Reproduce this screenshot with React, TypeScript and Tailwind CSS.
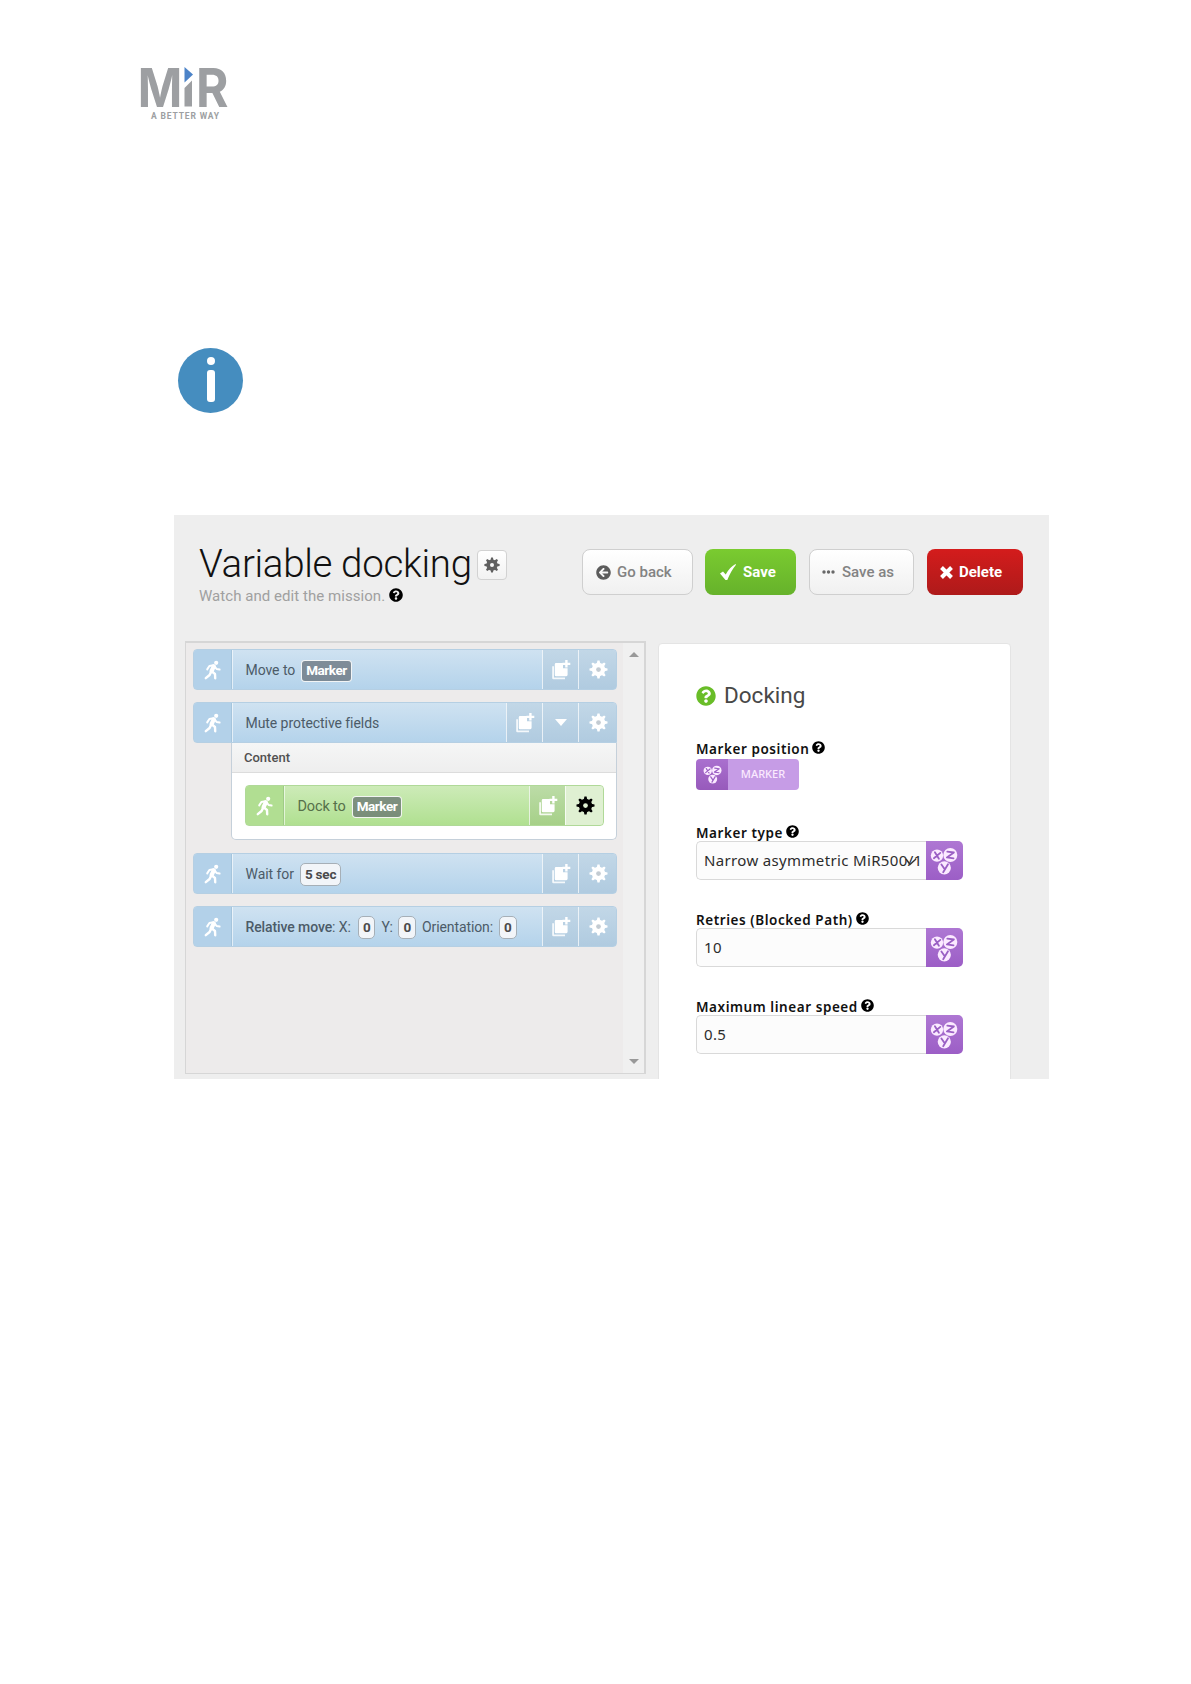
import React from "react";
import { FaQuestionCircle, FaArrowCircleLeft } from "react-icons/fa";

const Gear = ({ className = "", hole = "#dfe3e8" }: { className?: string; hole?: string }) => (
  <svg viewBox="0 0 20 20" className={className} fill="currentColor">
    {[0, 45, 90, 135].map((a) => (
      <path key={a} d="M8.1 4 8.9 .5h2.2L11.9 4v12l-.8 3.5H8.9L8.1 16z" transform={`rotate(${a} 10 10)`} />
    ))}
    <circle cx="10" cy="10" r="7" />
    <circle cx="10" cy="10" r="2.5" fill={hole} />
  </svg>
);

const Runner = () => (
  <svg viewBox="0 0 18 20" className="h-5 w-[18px]" fill="none" stroke="#fff" strokeLinecap="round" strokeLinejoin="round">
    <circle cx="12.2" cy="2.8" r="2.1" fill="#fff" stroke="none" />
    <path d="M9.8 6.4 7.6 11.200" strokeWidth="4.200" />
    <path d="M9.5 5.2 5.4 6 3.200 9.400M10.600 6.300l2 2.700 3 .5" strokeWidth="2" />
    <path d="M7.800 11.400 11 14l.2 4.300M7 12 5.600 15l-3.800 3.200" strokeWidth="2.400" />
  </svg>
);

const AddCopy = () => (
  <svg viewBox="0 0 20 20" className="h-5 w-5" fill="#fff">
    <path d="M1.2 6.2h1.8v11.4h11v1.6H2.4q-1.2 0-1.2-1.2z" opacity=".85" />
    <path d="M5 3h7v5.200h4.600v6.600q0 1.400-1.400 1.400H5q-1.200 0-1.200-1.200V4.200Q3.800 3 5 3z" />
    <path d="M14.200 0h2.400v2.700h2.700v2.200h-2.700v2.700h-2.400V4.900h-2.700V2.700h2.700z" />
  </svg>
);

const Trio = ({ className = "" }: { className?: string }) => (
  <svg viewBox="0 0 28 28" className={className}>
    <g fill="#fbeaff">
      <circle cx="7" cy="8.600" r="6.200" />
      <circle cx="20.300" cy="8" r="7" />
      <circle cx="14.300" cy="20.800" r="6.600" />
    </g>
    <g fill="none" stroke="#9a5fc4" strokeWidth="1.800" strokeLinecap="round" strokeLinejoin="round">
      <path d="M4.900 5.300 8.900 11.800M10.300 5.900 3.900 11.200" />
      <path d="M17.300 4.600l6.600 .9-7 4.900 6.600 1" />
      <path d="m11.400 17.400 2.800 4.200M18 17.200l-4.800 8" />
    </g>
  </svg>
);

const Tag = ({ children }: { children: React.ReactNode }) => (
  <span className="ml-[6px] flex h-[22px] items-center rounded-[4px] border border-white/90 bg-[#596169]/65 px-[4px] text-[13.500px] font-bold tracking-[-0.45px] text-white">
    {children}
  </span>
);

const Value = ({ children }: { children: React.ReactNode }) => (
  <span className="flex h-[23px] items-center rounded-[5px] border border-[#a6afb7] bg-[#f2f5f9] px-[4px] text-[13.500px] font-bold tracking-[-0.2px] text-[#4a4a4c]">
    {children}
  </span>
);

type RowProps = { children: React.ReactNode; expandable?: boolean; green?: boolean; flat?: boolean };

const Row = ({ children, expandable, green, flat }: RowProps) => (
  <div
    className={`flex overflow-hidden border text-[14px] tracking-[-0.06px] ${flat ? "rounded-t-[4px] rounded-bl-[4px]" : "rounded-[4px]"} ${
      green
        ? "h-[41px] border-[#b0d998] bg-linear-to-b from-[#cdebb8] to-[#b0e090] text-[#56704a]"
        : "h-full border-[#b5cfe3] bg-linear-to-b from-[#cfe2f1] to-[#b4d3eb] text-[#4c5b68]"
    }`}
  >
    <div
      className={`flex w-[38px] items-center justify-center border-r ${
        green ? "border-[#9fcc86] bg-[#b1de92]" : "border-[#a5c5dd] bg-[#b3d1e9]"
      }`}
    >
      <Runner />
    </div>
    <div className="flex flex-1 items-center border-l border-white/60 pt-[2px] pl-[12.500px] whitespace-nowrap">{children}</div>
    <div
      className={`flex w-[36px] items-center justify-center border-l border-white/70 ${
        green ? "bg-linear-to-b from-[#bcdca7] to-[#a6d088]" : "bg-linear-to-b from-[#c2d7e7] to-[#b0cbe0]"
      }`}
    >
      <AddCopy />
    </div>
    {expandable && (
      <div className="flex w-[36px] items-center justify-center border-l border-white/70 bg-linear-to-b from-[#c2d7e7] to-[#b0cbe0]">
        <span className="ml-px border-x-[6px] border-t-[7px] border-x-transparent border-t-white" />
      </div>
    )}
    <div
      className={`flex w-[38px] items-center justify-center border-l border-white/70 pl-px ${
        green ? "bg-[#dff0d2] text-black" : "bg-linear-to-b from-[#c2d7e7] to-[#b0cbe0] text-white"
      }`}
    >
      <Gear className="size-[19px]" hole={green ? "#dff0d2" : "#c3cbd2"} />
    </div>
  </div>
);

const Label = ({ children }: { children: React.ReactNode }) => (
  <div className="flex h-[21px] items-center pt-[2px] font-['Noto_Sans'] text-[13.500px] font-semibold tracking-[0.560px] text-[#111]">
    {children}
    <FaQuestionCircle className="mb-[5px] ml-[3px] size-[13px] text-black" />
  </div>
);

const Field = ({ children, select }: { children: React.ReactNode; select?: boolean }) => (
  <div className="flex h-[39px] w-[267px] font-['Noto_Sans'] text-[15px] tracking-[0.350px] text-[#2c2c2c]">
    <div className="relative flex flex-1 items-center overflow-hidden rounded-l-[5px] border border-r-0 border-[#d9d9d9] bg-[#fcfcfc] pl-[7px] whitespace-nowrap">
      {children}
      {select && (
        <svg viewBox="0 0 12 8" className="absolute top-[16px] right-[9px] h-2 w-3" fill="none" stroke="#333" strokeWidth="1.500">
          <path d="m1 1 4 5.500 6-5.500" />
        </svg>
      )}
    </div>
    <div className="flex w-[37px] items-center justify-center rounded-r-[5px] bg-linear-to-b from-[#ae77d3] to-[#9c5ec6] pr-px">
      <Trio className="size-[28px]" />
    </div>
  </div>
);

const lightButton =
  "flex h-[46px] items-center rounded-[8px] border border-[#cfcfcf] bg-linear-to-b from-white to-[#f0f0f0] text-[#838383]";

export default function App() {
  return (
    <div className="h-[1684px] w-[1191px] bg-white pt-[62px] font-['Roboto',sans-serif]">
      <svg viewBox="0 0 96 62" className="ml-[136px] h-[62px] w-[96px] overflow-visible" fill="#9d9fa2">
        <g fontFamily="Inter" fontWeight="700" fontSize="54">
          <text x="1.700" y="44.500" textLength="44.500" lengthAdjust="spacingAndGlyphs">M</text>
          <text x="60" y="44.500" textLength="32.500" lengthAdjust="spacingAndGlyphs">R</text>
        </g>
        <path d="M48.500 26 56 18.500v26h-7.500z" />
        <path d="M48.500 5 57 12.500l-8.500 8z" fill="#4c83c8" />
        <text x="15" y="57" fontFamily="Roboto" fontWeight="700" fontSize="8.500" textLength="68">A BETTER WAY</text>
      </svg>

      <div className="mt-[224px] ml-[178px] flex size-[65px] flex-col items-center rounded-full bg-[#458dbf] pt-[9px]">
        <span className="size-[8px] rounded-full bg-white" />
        <span className="mt-[5px] h-[32px] w-[8px] rounded-[3px] bg-white" />
      </div>

      <main className="mt-[102px] ml-[174px] h-[564px] w-[875px] overflow-hidden bg-[#eeeeee]">
        <header className="flex h-[126px] pl-[25px]">
          <div className="w-[383px] pt-[26px]">
            <div className="flex h-[46px] items-center">
              <h1 className="w-[278px] text-[38.500px] leading-[46px] font-light tracking-[-0.33px] whitespace-nowrap text-[#111]">Variable docking</h1>
              <div className="mt-[2px] flex size-[30px] items-center justify-center rounded-[4px] border border-[#d2d2d2] bg-linear-to-b from-white to-[#f2f2f2] text-[#606060]">
                <Gear className="size-[16px]" hole="#f8f8f8" />
              </div>
            </div>
            <div className="mt-[-1px] flex items-center text-[15px] leading-[20px] tracking-[0.05px] text-[#a0a0a0]">
              Watch and edit the mission.
              <FaQuestionCircle className="mb-[3px] ml-[4px] size-[14px] text-black" />
            </div>
          </div>
          <div className="flex pt-[34px] text-[15px] font-medium">
            <div className={`${lightButton} w-[111px] pl-[13px]`}>
              <FaArrowCircleLeft className="mr-[6px] size-[15px] text-[#5c5c5c]" />
              Go back
            </div>
            <div className="ml-[12px] flex h-[46px] w-[91px] items-center rounded-[8px] bg-linear-to-b from-[#7acb30] to-[#66b22b] pl-[14px] font-bold text-white">
              <svg viewBox="0 0 18 18" className="mr-[6px] size-[18px]" fill="#fff">
                <path d="M1 10.500 4 8.500 6.700 11.600Q10.400 4.300 16.500 1l.5.700Q12 7.800 8.300 17H6.500Z" />
              </svg>
              Save
            </div>
            <div className={`${lightButton} ml-[13px] w-[105px] pl-[12px]`}>
              <svg viewBox="0 0 13 4" className="mr-[7px] h-[4px] w-[13px]" fill="#686868">
                <circle cx="2" cy="2" r="1.700" />
                <circle cx="6.500" cy="2" r="1.700" />
                <circle cx="11" cy="2" r="1.700" />
              </svg>
              Save as
            </div>
            <div className="ml-[13px] flex h-[46px] w-[96px] items-center rounded-[8px] bg-linear-to-b from-[#d41c1c] to-[#ae1a1a] pl-[13px] font-bold text-white">
              <svg viewBox="0 0 13 13" className="mr-[6px] size-[13px]" stroke="#fff" strokeWidth="4">
                <path d="M1.500 1.500l10 10M11.500 1.500l-10 10" />
              </svg>
              Delete
            </div>
          </div>
        </header>

        <div className="flex pl-[11px]">
          <section className="flex h-[433px] w-[461px] border-[1.500px] border-r-2 border-t-2 border-[#d6d6d6] bg-[#edebeb]">
            <div className="w-[437px] pt-[6px] pl-[7px]">
              <div className="h-[41px] w-[424px]">
                <Row>
                  Move to <Tag>Marker</Tag>
                </Row>
              </div>
              <div className="mt-[12px] h-[41px] w-[424px]">
                <Row expandable flat>Mute protective fields</Row>
              </div>
              <div className="ml-[38px] h-[97px] w-[386px] rounded-b-[5px] border border-t-0 border-[#c5d0da] bg-white">
                <div className="flex h-[30px] items-center border-b border-[#dcdcdc] bg-linear-to-b from-[#f5f6f6] to-[#eeeeee] pl-[12px] text-[13px] font-medium text-[#505050]">
                  Content
                </div>
                <div className="mt-[12px] ml-[13px] w-[359px]">
                  <Row green>
                    <span className="text-[14.500px] tracking-[-0.15px]">Dock to</span> <Tag>Marker</Tag>
                  </Row>
                </div>
              </div>
              <div className="mt-[13px] h-[41px] w-[424px]">
                <Row>
                  <span className="mr-[6px]">Wait for</span>
                  <Value>5 sec</Value>
                </Row>
              </div>
              <div className="mt-[12px] h-[41px] w-[424px]">
                <Row>
                  <span className="font-medium tracking-[-0.1px]">Relative move</span>
                  <span className="mr-[7px]">: X:</span>
                  <Value>0</Value>
                  <span className="mx-[6px] tracking-[-0.4px]">Y:</span>
                  <Value>0</Value>
                  <span className="mx-[6px] tracking-[-0.1px]">Orientation:</span>
                  <Value>0</Value>
                </Row>
              </div>
            </div>
            <div className="flex flex-1 flex-col items-center justify-between bg-[#f0f0f0] pt-[9px] pb-[9px]">
              <span className="border-x-[5px] border-b-[5px] border-x-transparent border-b-[#999]" />
              <span className="border-x-[5px] border-t-[5px] border-x-transparent border-t-[#999]" />
            </div>
          </section>

          <section className="mt-[2px] ml-[12px] h-[440px] w-[353px] rounded-[4px] border border-[#e4e4e4] bg-white pl-[37px]">
            <h2 className="mt-[38px] flex h-[28px] items-center text-[22.500px] text-[#484848]">
              <FaQuestionCircle className="mr-[8px] size-[20px] text-[#69bd28]" />
              Docking
            </h2>
            <div className="mt-[28px]">
              <Label>Marker position</Label>
              <div className="flex h-[31px] w-[103px] overflow-hidden rounded-[4px]">
                <div className="flex w-[32px] items-center justify-center bg-linear-to-b from-[#aa70cf] to-[#975abb]">
                  <Trio className="size-[19px]" />
                </div>
                <div className="flex flex-1 items-center justify-center bg-[#c69ce6] pr-px font-['Noto_Sans'] text-[11px] font-medium text-[#fbeaff]">MARKER</div>
              </div>
            </div>
            <div className="mt-[32px]">
              <Label>Marker type</Label>
              <div className="mt-[-2px]">
                <Field select>Narrow asymmetric MiR500/1</Field>
              </div>
            </div>
            <div className="mt-[29px]">
              <Label>Retries (Blocked Path)</Label>
              <div className="mt-[-2px]">
                <Field>10</Field>
              </div>
            </div>
            <div className="mt-[29px]">
              <Label>Maximum linear speed</Label>
              <div className="mt-[-2px]">
                <Field>0.5</Field>
              </div>
            </div>
          </section>
        </div>
      </main>
    </div>
  );
}
